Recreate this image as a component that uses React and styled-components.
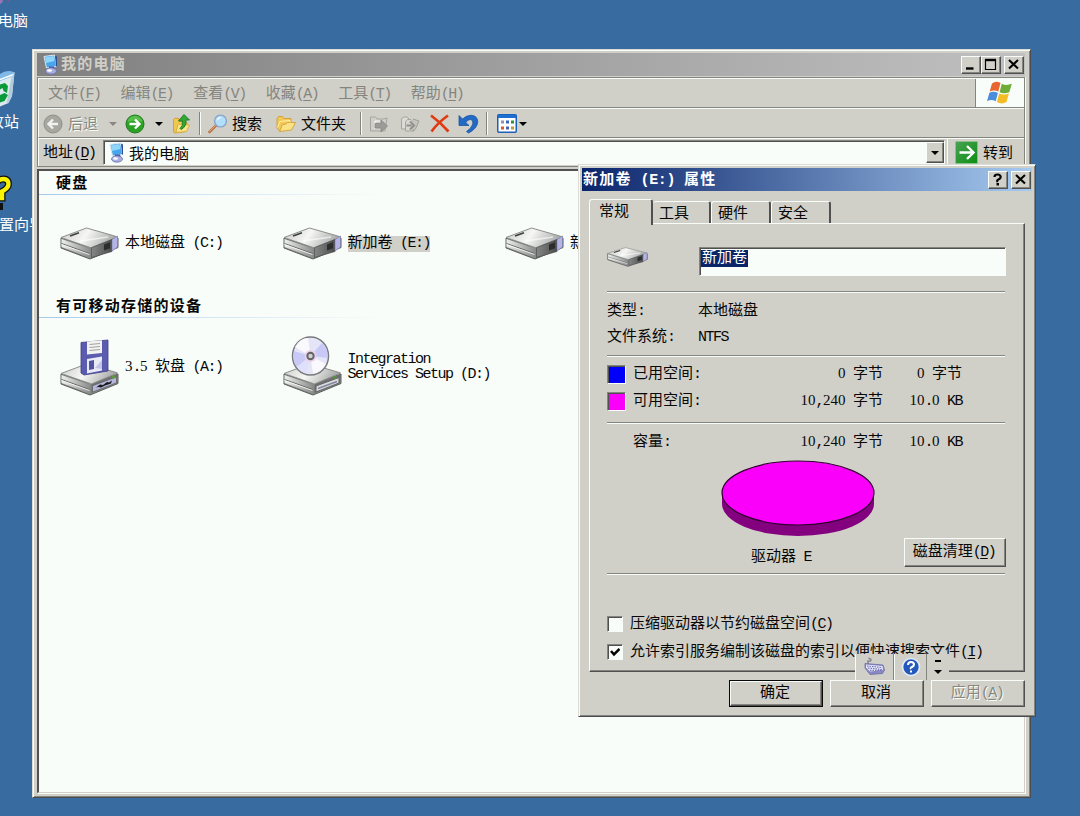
import React from 'react';
import styled, { createGlobalStyle, css } from 'styled-components';

const FACE = '#d1d0c8';
const PAPER = '#f8fdf9';
const DARK = '#505050';
const MID = '#85857f';

const Global = createGlobalStyle`
  * { box-sizing: border-box; }
  body {
    margin: 0;
    overflow: hidden;
    font-family: "Liberation Mono", "Noto Sans CJK SC", monospace;
    font-size: 15px;
    line-height: 18px;
    color: #080808;
  }
  svg { display: block; flex: none; }
`;

const Desktop = styled.main`
  position: relative;
  width: 1080px;
  height: 816px;
  overflow: hidden;
  background: #386b9f;
`;

/* ---------- text ---------- */

const Text = styled.span`
  display: inline-block;
  white-space: pre;
  height: 18px;
  color: ${p => p.$color || 'inherit'};
  ${p => p.$bold && css`font-weight: 700; letter-spacing: 1.25px;`}
  ${p => p.$disabled && css`color: #888882; text-shadow: 1px 1px 0 ${PAPER};`}
`;

const Latin = styled.span`
  letter-spacing: ${p => (p.$bold ? '-0.3px' : '-1.5px')};
`;

const Digits = styled.span`
  font-family: "Liberation Serif", serif;
  letter-spacing: 0;
  line-height: 0;
`;

const Key = styled.u`
  text-underline-offset: 2px;
`;

const withDigits = text =>
  text.split(/(\d+)/).map((run, i) => (i % 2 ? <Digits key={i}>{run}</Digits> : run));

function Label({ children, bold, disabled, color }) {
  const parts = children.split(/([\x20-\x7e]+)/).filter(Boolean);
  return (
    <Text $bold={bold} $disabled={disabled} $color={color}>
      {parts.map((part, i) => {
        if (!/^[\x20-\x7e]/.test(part)) return part;
        const at = part.indexOf('&');
        if (at < 0) return <Latin key={i} $bold={bold}>{withDigits(part)}</Latin>;
        return (
          <Latin key={i} $bold={bold}>
            {part.slice(0, at)}<Key>{part[at + 1]}</Key>{part.slice(at + 2)}
          </Latin>
        );
      })}
    </Text>
  );
}

/* ---------- icons ---------- */

const ComputerIcon = () => (
  <svg width="17" height="21" viewBox="0 0 17 21">
    <path d="M2 2.500 12.500 1l2 11.500L4.500 14z" fill="#4aa6ec" stroke="#dbe8f3" strokeWidth="1" />
    <path d="M3 3.500 11.500 2l1 5L4 9z" fill="#8fd6f9" />
    <path d="M13 1.500l2 1v10.500l-1-1z" fill="#2f4f94" />
    <path d="M7 12.500h5l1 3.500H7z" fill="#3f4da0" />
    <ellipse cx="9" cy="17" rx="5.500" ry="3.200" fill="#a9afe0" stroke="#6870ac" strokeWidth=".8" />
    <ellipse cx="7.500" cy="16.500" rx="2.500" ry="1.200" fill="#fff" />
  </svg>
);

const BackIcon = () => (
  <svg width="20" height="20" viewBox="0 0 20 20">
    <circle cx="10" cy="10" r="9" fill="#a7a7a2" stroke="#8f8f8a" />
    <path d="M15 10H6M10 5.500 5.500 10l4.500 4.500" fill="none" stroke="#f1f1ed" strokeWidth="2.400" />
  </svg>
);

const ForwardIcon = () => (
  <svg width="20" height="20" viewBox="0 0 20 20">
    <circle cx="10" cy="10" r="9" fill="#2ba126" stroke="#1c7c1b" />
    <path d="M2.500 8a7.600 7.600 0 0 1 15 0q-7 -3 -15 0z" fill="#6ccb5c" opacity=".7" />
    <path d="M4.500 10H14M10 5.500l4.500 4.500-4.500 4.500" fill="none" stroke="#fff" strokeWidth="2.400" />
  </svg>
);

const UpIcon = () => (
  <svg width="19" height="21" viewBox="0 0 19 21">
    <path d="M1.500 6.500 3 5l4 .5V8l8 1.500-1 9L3 20l-1.500-1z" fill="#f1c84e" stroke="#c8982c" strokeWidth=".8" />
    <path d="M4 19.500 6 11l11.500 1-3 6.500z" fill="#fbe488" stroke="#d3a63a" strokeWidth=".8" />
    <path d="M8 15.500q3-2 2.500-7.500H6.500l5.500-6.500L17.500 7H14q.5 7-5 9.500z" fill="#32a834" stroke="#187a22" strokeWidth=".9" />
  </svg>
);

const SearchIcon = () => (
  <svg width="20" height="20" viewBox="0 0 20 20">
    <path d="M1.500 18 8.500 11" stroke="#b8764a" strokeWidth="2.600" strokeLinecap="round" />
    <path d="M1.500 17.500 8 11" stroke="#e7a36f" strokeWidth="1" />
    <circle cx="12.500" cy="7" r="5.900" fill="#b2dffa" stroke="#8ba4cc" strokeWidth="1.400" />
    <path d="M8.500 7q1-4.500 5-4Q11 5 8.500 7z" fill="#fff" />
  </svg>
);

const FolderIcon = () => (
  <svg width="20" height="18" viewBox="0 0 20 18">
    <path d="M1 13V4l1.500-2.500h4L8 3.500h7V8l-11 8.500z" fill="#f3c954" stroke="#cf9d35" strokeWidth=".9" />
    <path d="M3.500 16.500 6.500 9.500 10 9l1.500-1.500H19.500L15.500 15z" fill="#fbe285" stroke="#d09f38" strokeWidth=".9" />
    <path d="M1.500 12.500 4 6.500l10-1v2" fill="none" stroke="#fff0ad" />
  </svg>
);

const MoveIcon = ({ copy }) => (
  <svg width="20" height="20" viewBox="0 0 20 20">
    {copy ? (
      <>
        <path d="M1.500 5l2-2H7l3 3v9H1.500z" fill="#dcdbd5" stroke="#a5a5a0" />
        <path d="M5.500 7.500l2-2H11l3 3V17H5.500z" fill="#d6d5cf" stroke="#a5a5a0" />
        <path d="M13 5l3 1 3 1-3.500 8-3.500 2" fill="#c4c3bd" stroke="#a0a09b" />
        <path d="M6.500 11.500h5M10 7.500l4 4-4 4" fill="none" stroke="#90908c" strokeWidth="2" />
      </>
    ) : (
      <>
        <path d="M1.500 17V3h5l1.500 2h7l3-1-2 13z" fill="#d0cfc9" stroke="#a5a5a0" />
        <path d="M6 15V7h5" fill="none" stroke="#fafaf6" />
        <path d="M6 9.500h6V6l6.500 6-6.500 6v-4H6z" fill="#9b9b97" stroke="#82827e" strokeWidth=".7" />
      </>
    )}
  </svg>
);

const DeleteIcon = () => (
  <svg width="20" height="19" viewBox="0 0 20 19">
    <path d="M1 1.500Q10 8 18.500 17.500M18 1.500Q8 8.500 1.500 17.500" fill="none" stroke="#df3b12" strokeWidth="2.700" />
  </svg>
);

const UndoIcon = () => (
  <svg width="21" height="20" viewBox="0 0 21 20">
    <path d="M1 1.500V11.500H11L7.800 8.500Q10 5.300 12.500 5.500 15.500 6 14.800 10 13.500 14 8.500 17.500L10.500 19Q19.500 14.500 19.800 7.500 19 1 12.500 1.300 8 1.600 4.500 5z" fill="#2369c6" stroke="#124c9c" strokeWidth=".7" />
  </svg>
);

const ViewsIcon = () => (
  <svg width="20" height="19" viewBox="0 0 20 19">
    <rect x=".75" y=".75" width="18.500" height="17.500" rx="1" fill="#fff" stroke="#1d5fb9" strokeWidth="1.500" />
    <path d="M1 1h18v3H1z" fill="#1f6fd3" />
    <path d="M4 6.500h3v3H4z" fill="#8a94b5" /><path d="M9 6.500h3v3H9z" fill="#3f62bb" /><path d="M14 6.500h3v3h-3z" fill="#2b9344" />
    <path d="M4 12.500h3v3H4z" fill="#e0552d" /><path d="M9 12.500h3v3H9z" fill="#4c66ae" /><path d="M14 12.500h3v3h-3z" fill="#c39a2d" />
  </svg>
);

const WindowsLogo = () => (
  <svg width="26" height="24" viewBox="0 0 26 24">
    <path d="M5 2.500Q9-.5 13.500 2L11.300 10.500Q7 8.300 2.700 10.500z" fill="#e8662f" />
    <path d="M14.800 2.700Q19 5 24.800 2.800L22.300 11.200Q17 13.300 12.600 11.200z" fill="#6dad37" />
    <path d="M2.400 11.700Q6.800 9.700 10.900 11.900L8.700 20.300Q4.500 18 0 20.200z" fill="#4c8ddb" />
    <path d="M12.200 12.500Q17 14.700 21.900 12.500L19.500 21Q15 23.800 9.900 21z" fill="#f3bd26" />
  </svg>
);

const GoIcon = () => (
  <svg width="23" height="23" viewBox="0 0 23 23">
    <defs><linearGradient id="go" x1="0" y1="0" x2="1" y2="1"><stop offset="0" stopColor="#4aa254" /><stop offset="1" stopColor="#0b8f12" /></linearGradient></defs>
    <rect x=".5" y=".5" width="22" height="22" rx="1" fill="url(#go)" stroke="#8cbf8a" />
    <path d="M4.500 11.500H18M12 5l6.500 6.500L12 18" fill="none" stroke="#fff" strokeWidth="2.400" />
  </svg>
);

const DriveBody = () => (
  <>
    <path d="M1 11v10L30 32l28-11.500V11L31 20.500z" fill="#888a89" stroke="#5d5f5e" strokeWidth="1" />
    <path d="M1 10.500 26.500 1 53 8.500 57.500 10 31.500 21z" fill="url(#top)" stroke="#8d8f8d" strokeWidth="1" />
    <path d="M1.500 12 29.500 21.500V30.500L1.500 20z" fill="url(#side)" />
    <path d="M1.500 16.500 29.500 26.500" stroke="#666866" strokeWidth="1" />
    <path d="M1.500 17.500 29.500 27.500" stroke="#fff" strokeWidth=".8" />
    <path d="M31.500 21.500 57 12v8L31.500 30z" fill="#6c6e6d" />
  </>
);

const Gradients = () => (
  <defs>
    <linearGradient id="top" x1="0" y1="0" x2="1" y2=".25"><stop offset="0" stopColor="#c9cbc9" /><stop offset=".5" stopColor="#f6f7f5" /><stop offset="1" stopColor="#a9abaa" /></linearGradient>
    <linearGradient id="side" x1="0" y1="0" x2="1" y2="0"><stop offset="0" stopColor="#eceeec" /><stop offset="1" stopColor="#8d8f8e" /></linearGradient>
    <linearGradient id="bay" x1="0" y1="0" x2="1" y2="0"><stop offset="0" stopColor="#858786" /><stop offset="1" stopColor="#4b4d4c" /></linearGradient>
  </defs>
);

const HardDriveIcon = ({ width = 59, height = 33 }) => (
  <svg width={width} height={height} viewBox="0 0 59 33" preserveAspectRatio="none">
    <Gradients />
    <DriveBody />
    <path d="M31.500 20.500 52 12.500v12L31.500 30.500z" fill="url(#bay)" stroke="#454746" strokeWidth=".6" />
    <path d="M44 17.500l6-2.300v6L44 23.500z" fill="#2b2d2c" />
    <path d="M52 12.500l5.500-3.500v11l-5.500 4z" fill="#b4b5e6" stroke="#7778a5" strokeWidth=".6" />
    <path d="M10 9 19 5.800" stroke="#3c3e3d" strokeWidth="1.700" />
    <path d="M20 14 48 10" stroke="#fff" strokeWidth="1.500" opacity=".6" />
  </svg>
);

const FloppyDriveIcon = () => (
  <svg width="59" height="57" viewBox="0 0 59 57">
    <Gradients />
    <g transform="translate(0 24)"><DriveBody /></g>
    <path d="M33 47 56 38.500v5L33 52.500z" fill="#b5b6dc" />
    <path d="M36 48.500l4-3 3 .5 4-3 2 .5 3-2-1 3-6 2-4 2-3-.5z" fill="#191919" />
    <circle cx="53.500" cy="38" r="1.700" fill="#5b9c38" />
    <path d="M21 3.500 48 1v31L24 36l-3-2z" fill="#5b5cb0" stroke="#3d3e83" strokeWidth=".8" />
    <path d="M27 2.500 42 1.200v12.800L27 15.500z" fill="#f2f3f1" />
    <path d="M29.500 5.500 40 4.500M29.500 8.500 40 7.500M29.500 11.500 40 10.500" stroke="#999" strokeWidth=".9" />
    <path d="M27 20 42 17.500v14L27 34.500z" fill="#eaeaf7" />
    <path d="M29 22l5-1v9l-5 1z" fill="#5253a0" />
    <path d="M35 29 42 21v9z" fill="#c3c4e4" />
  </svg>
);

const DiscDriveIcon = () => (
  <svg width="59" height="60" viewBox="0 0 59 60">
    <Gradients />
    <g transform="translate(0 27)"><DriveBody /></g>
    <path d="M33 50 56 41.500v5.500L33 56z" fill="#d9dade" stroke="#656766" />
    <path d="M35 52.500 54 45.500" stroke="#8486a0" strokeWidth="1.500" />
    <circle cx="52" cy="41.500" r="1.500" fill="#4f9435" />
    <ellipse cx="27.500" cy="20" rx="18" ry="19" fill="#e5e5f8" stroke="#787a7c" strokeWidth="1.500" />
    <path d="M27.500 20 12 11Q17 2 25 2zM27.500 20 43 28Q38 37 30 37.500z" fill="#fafafe" />
    <path d="M27.500 20 11 15Q9 25 14 31zM27.500 20 44.500 22Q45 11 39 7z" fill="#c8c9f7" />
    <path d="M27.500 20 14 31Q17 36 23 37z" fill="#dfe0fb" />
    <circle cx="27.500" cy="20" r="6" fill="#e9d2ea" />
    <circle cx="27.500" cy="20" r="3.200" fill="#d0d0d0" stroke="#606265" strokeWidth="1.900" />
  </svg>
);

const BinIcon = () => (
  <svg width="16" height="38" viewBox="0 0 16 38">
    <path d="M0 5 14.500 2 12 26 8.500 33 0 36.500z" fill="#dceaf0" />
    <path d="M0 4Q7-1 14.500 2.500L11 7 0 11z" fill="#7fb9e8" />
    <path d="M0 9.500 13.500 4.500" stroke="#f8ffff" strokeWidth="1.500" />
    <path d="M14.500 2.500 12 26 8.500 33 6.500 34 11.500 7z" fill="#b2ccd9" />
    <path d="M0 14.500 5 13l3 3-1 7-3.500-2-1-3L0 19.500zM0 25l4.500-2L8 25 4.500 31 0 32.500z" fill="#0b9a3a" />
  </svg>
);

const QuestionIcon = () => (
  <svg width="13" height="38" viewBox="0 0 13 38">
    <path d="M-4 9Q-2 4 3.500 4q5 0 5 5Q8.500 13 2 16.500V23h-5" fill="none" stroke="#111" strokeWidth="7" />
    <path d="M-4 9Q-2 4 3.500 4q5 0 5 5Q8.500 13 2 16.500V23h-5" fill="none" stroke="#f8f400" strokeWidth="4.400" />
    <path d="M0 28h3v7H0z" fill="#111" />
  </svg>
);

const KeyboardIcon = () => (
  <svg width="22" height="20" viewBox="0 0 22 20">
    <path d="M4 7V4q3 1 3-1.500L4.500 1" fill="none" stroke="#8b8b96" strokeWidth="1.600" />
    <path d="M1 6.500 19 8l1.500 5-2 3.500L6 17.500 1 11z" fill="#8788c4" stroke="#6c6da5" strokeWidth=".8" />
    <path d="M2 7.500 18.500 9 19 13 6 14.500 2 10.500z" fill="#e6e6fb" />
    <path d="M3 9 18 10.500M4 11 18 12.500M6 13.300 17 13.400" stroke="#6263a8" strokeWidth="1" strokeDasharray="1.500 1" />
  </svg>
);

const HelpIcon = () => (
  <svg width="20" height="20" viewBox="0 0 20 20">
    <circle cx="10" cy="10" r="8.500" fill="#2558bb" stroke="#e3ecf8" strokeWidth="1.700" />
    <path d="M7 8Q7 5 10 5t3 2.500Q13 9 11 10t-1 2" fill="none" stroke="#fff" strokeWidth="2" />
    <path d="M9 13.500h2v2H9z" fill="#fff" />
  </svg>
);

const Caret = styled.i`
  flex: none;
  border: 4px solid transparent;
  border-top-color: ${p => p.$color || '#000'};
  border-bottom: 0;
  width: 7px;
`;

/* ---------- common controls ---------- */

const raised = css`
  border: 1px solid;
  border-color: ${PAPER} ${DARK} ${DARK} ${PAPER};
  box-shadow: inset -1px -1px 0 ${MID};
`;

const WindowFrame = styled.section`
  position: absolute;
  display: flex;
  flex-direction: column;
  background: ${FACE};
  border: 1px solid;
  border-color: #dcdcd6 #484c50 #484c50 #dcdcd6;
  box-shadow: inset 1px 1px 0 ${PAPER}, inset -1px -1px 0 ${MID};
`;

const ExplorerFrame = styled(WindowFrame)`
  left: 32px;
  top: 49px;
  width: 999px;
  height: 749px;
  padding: 3px 5px 4px 4px;
`;

const DialogFrame = styled(WindowFrame)`
  left: 578px;
  top: 164px;
  width: 458px;
  height: 553px;
  padding: 3px;
`;

const TitleBar = styled.header`
  display: flex;
  align-items: center;
  flex: none;
  height: 23px;
  padding: 0 1px 0 ${p => (p.$active ? 1 : 5)}px;
  color: ${p => (p.$active ? '#fff' : '#d1d0c8')};
  background: ${p => (p.$active
    ? 'linear-gradient(90deg, #0a246a, #a6caf0)'
    : 'linear-gradient(90deg, #808080, #c0c0c0)')};
  ${Text} { padding-top: 1px; }
`;

const TitleText = styled.div`
  flex: 1;
  display: flex;
  gap: 2px;
  align-items: center;
`;

const CaptionButton = styled.button`
  ${raised}
  display: grid;
  place-items: center;
  width: 20px;
  height: 18px;
  padding: 0;
  margin-left: ${p => p.$gap || 0}px;
  background: ${FACE};
`;

const CaptionGlyph = ({ kind }) => (
  <svg width="14" height="13" viewBox="0 0 14 13" fill="none" stroke="#000">
    {kind === 'min' && <path d="M2 10.500H9.500" strokeWidth="2.400" />}
    {kind === 'max' && <><path d="M1.500 1v10.500h10V1" strokeWidth="1.200" /><path d="M1 2h11" strokeWidth="2.400" /></>}
    {kind === 'close' && <path d="M2 2l9 8.500M11 2l-9 8.500" strokeWidth="2.100" />}
    {kind === 'help' && <><path d="M3.500 4Q3.500 1.500 6.500 1.500T9.700 4Q9.700 5.500 7.500 6.500T6.700 9" strokeWidth="2.200" /><path d="M5.500 10h2.500v2.500H5.500z" fill="#000" stroke="none" /></>}
  </svg>
);

/* ---------- explorer ---------- */

const Bars = styled.div`
  margin-top: 1px;
  border: 1px solid ${MID};
  box-shadow: 1px 0 0 ${PAPER};
`;

const Bar = styled.div`
  display: flex;
  align-items: center;
  height: ${p => p.$h}px;
  border-top: 1px solid ${PAPER};
  border-left: 1px solid ${PAPER};
  border-bottom: ${p => (p.$last ? 0 : 1)}px solid ${MID};
  ${Text} { padding-top: 2px; }
`;

const MenuItems = styled.nav`
  display: flex;
  flex: 1;
  gap: 20px;
  padding-left: 9px;
`;

const LogoBox = styled.div`
  align-self: stretch;
  display: flex;
  align-items: center;
  justify-content: center;
  width: 49px;
  border-left: 1px solid ${MID};
  background: ${PAPER};
`;

const Tool = styled.div`
  display: flex;
  align-items: center;
  gap: ${p => p.$gap || 4}px;
  margin-left: ${p => p.$ml}px;
  padding-top: 1px;
`;

const ToolRule = styled.i`
  width: 2px;
  height: 23px;
  margin-left: ${p => p.$ml}px;
  border-left: 1px solid ${MID};
  border-right: 1px solid ${PAPER};
`;

const AddressLabel = styled.div`
  width: 64px;
  padding-left: 4px;
`;

const Combo = styled.div`
  display: flex;
  align-items: center;
  flex: 1;
  gap: 4px;
  height: 25px;
  padding-left: 4px;
  border: 1px solid;
  border-color: ${MID} ${PAPER} ${PAPER} ${MID};
  box-shadow: inset 1px 1px 0 ${DARK};
  background: ${PAPER};
  ${Text} { padding-top: 3px; }
`;

const ComboButton = styled.button`
  ${raised}
  display: grid;
  place-items: center;
  width: 18px;
  height: 21px;
  padding: 0;
  margin: 0 0 0 auto;
  background: ${FACE};
`;

const Go = styled.div`
  display: flex;
  align-items: center;
  gap: 5px;
  width: 77px;
  height: 100%;
  margin-left: 2px;
  padding-left: 7px;
  border-left: 1px solid ${PAPER};
`;

const FileArea = styled.div`
  flex: 1;
  margin-top: 2px;
  border: 2px solid;
  border-color: ${DARK} ${FACE} ${FACE} ${DARK};
  border-right-width: 1px;
  border-bottom-width: 1px;
  box-shadow: 1px 1px 0 ${PAPER};
  background: ${PAPER};
`;

const GroupTitle = styled.h2`
  margin: 0;
  height: 24px;
  padding: 2px 0 0 17px;
  font-size: 15px;
  border-bottom: 1px solid;
  border-image: linear-gradient(90deg, #a4c9ec 0, #cfe2f3 150px, transparent 345px) 1;
  ${Text} { padding-top: 3px; }
`;

const Group = styled.div`
  display: flex;
  align-items: flex-end;
  height: ${p => p.$h}px;
  padding-left: 21px;
`;

const Drive = styled.div`
  display: flex;
  align-items: center;
  gap: 6px;
  width: 222.5px;
  white-space: nowrap;
`;

const DriveName = styled.div`
  line-height: 15px;
  display: flex;
  flex-direction: column;
  align-items: flex-start;
  background: ${p => (p.$selected ? FACE : 'transparent')};
  ${Text} {
    height: ${p => (p.$two ? 15 : 16)}px;
    padding-top: ${p => (p.$two ? 1 : 0)}px;
  }
`;

/* ---------- properties dialog ---------- */

const Tabs = styled.div`
  display: flex;
  align-items: flex-end;
  height: 32px;
  margin-left: 7px;
`;

const Tab = styled.div`
  width: ${p => p.$w}px;
  height: ${p => (p.$on ? 26 : 22)}px;
  margin-bottom: ${p => (p.$on ? -2 : 0)}px;
  padding: ${p => (p.$on ? '4px 0 0 9px' : '4px 0 0 6px')};
  background: ${FACE};
  border: 1px solid ${PAPER};
  border-right: 2px solid ${DARK};
  border-left-width: ${p => (p.$after ? 0 : 1)}px;
  border-bottom: 0;
  border-radius: 3px 3px 0 0;
  ${p => p.$on && css`position: relative; z-index: 1;`}
`;

const Page = styled.div`
  width: 436px;
  height: 449px;
  margin-left: 7px;
  padding: 0 17px;
  border: 1px solid;
  border-color: ${PAPER} ${DARK} ${DARK} ${PAPER};
  box-shadow: inset -1px -1px 0 ${MID};
`;

const Rule = styled.hr`
  width: 398px;
  height: 2px;
  margin: 0;
  border: 0;
  border-top: 1px solid ${MID};
  border-bottom: 1px solid ${PAPER};
`;

const NameRow = styled.div`
  display: flex;
  align-items: flex-start;
  justify-content: space-between;
  width: 399px;
  height: 67px;
  padding-top: 23px;
`;

const NameInput = styled.div`
  width: 307px;
  height: 29px;
  padding: 1px;
  border: 1px solid;
  border-color: ${MID} ${PAPER} ${PAPER} ${MID};
  box-shadow: inset 1px 1px 0 ${DARK};
  background: ${PAPER};
`;

const Selection = styled.span`
  display: inline-block;
  height: 17px;
  line-height: 18px;
  padding: 0 1px;
  margin: 1px 0 0;
  color: #fff;
  background: #0a246a;
`;

const Block = styled.div`
  height: ${p => p.$h}px;
  padding-top: ${p => p.$pt}px;
  ${Text} { padding-top: 1px; }
`;

const InfoRow = styled.div`
  display: grid;
  grid-template-columns: 91px 1fr;
  height: 26px;
`;

const UsageRow = styled.div`
  display: grid;
  grid-template-columns: 26px 110px 140px 79px;
  height: 26.500px;
  & > :nth-child(n+3) { justify-self: end; }
`;

const Swatch = styled.i`
  width: 19px;
  height: 19px;
  border: 1px solid;
  border-color: ${MID} ${PAPER} ${PAPER} ${MID};
  box-shadow: inset 1px 1px 0 ${DARK};
  background: ${p => p.$color || 'transparent'};
  visibility: ${p => (p.$color ? 'visible' : 'hidden')};
`;

const ChartRow = styled.div`
  display: flex;
  justify-content: space-between;
  align-items: flex-end;
  width: 399px;
  height: 113px;
  padding-left: 114px;
`;

const Chart = styled.div`
  display: flex;
  flex-direction: column;
  gap: 12px;
  height: 113px;
`;

const ChartLabel = styled.div`
  padding-left: 30px;
`;

const CleanupSlot = styled.div`
  padding-bottom: 6px;
  ${Text} { padding-top: 1px; }
`;

const Button = styled.button`
  ${raised}
  display: flex;
  align-items: center;
  justify-content: center;
  width: ${p => p.$w || 94}px;
  height: ${p => p.$h || 27}px;
  padding: 0 2px 1px 0;
  font: inherit;
  color: inherit;
  background: ${FACE};
  ${p => p.$default && css`outline: 1px solid #080808; outline-offset: -1px; border-width: 2px;`}
`;

const Check = styled.div`
  display: flex;
  align-items: center;
  gap: 7px;
  height: 28px;
`;

const Box = styled.i`
  display: grid;
  place-items: center;
  width: 16px;
  height: 16px;
  border: 1px solid;
  border-color: ${MID} ${PAPER} ${PAPER} ${MID};
  box-shadow: inset 1px 1px 0 ${DARK};
  background: ${PAPER};
`;

const Actions = styled.div`
  display: flex;
  gap: 7px;
  margin: 8px 0 0 147px;
  ${Text} { padding-top: 1px; }
`;

/* ---------- floating items ---------- */

const DesktopItem = styled.div`
  position: absolute;
  left: 0;
  top: ${p => p.$y}px;
  width: 32px;
  height: ${p => p.$h}px;
  overflow: hidden;
  display: flex;
  flex-direction: column;
  color: #fff;
`;

const Caption = styled.div`
  margin-top: auto;
  margin-left: ${p => p.$shift}px;
`;

const LanguageBar = styled.aside`
  position: absolute;
  left: 855px;
  top: 654px;
  width: 94px;
  height: 26px;
  display: flex;
  align-items: center;
  background: ${FACE};
`;

const LangCell = styled.div`
  display: flex;
  align-items: center;
  justify-content: center;
  width: ${p => p.$w}px;
  height: 26px;
  border-left: 1px solid ${PAPER};
  border-right: 1px solid ${MID};
`;

const LangMenu = styled.div`
  display: flex;
  flex-direction: column;
  align-items: center;
  gap: 8px;
  width: 22px;
`;

const Dash = styled.i`
  width: 6px;
  height: 2px;
  background: #000;
`;

const MENUS = ['文件(&F)', '编辑(&E)', '查看(&V)', '收藏(&A)', '工具(&T)', '帮助(&H)'];

function Explorer() {
  return (
    <ExplorerFrame>
      <TitleBar>
        <TitleText><ComputerIcon /><Label bold>我的电脑</Label></TitleText>
        <CaptionButton><CaptionGlyph kind="min" /></CaptionButton>
        <CaptionButton><CaptionGlyph kind="max" /></CaptionButton>
        <CaptionButton $gap={3}><CaptionGlyph kind="close" /></CaptionButton>
      </TitleBar>
      <Bars>
        <Bar $h={30}>
          <MenuItems>{MENUS.map(m => <Label key={m} color="#858580">{m}</Label>)}</MenuItems>
          <LogoBox><WindowsLogo /></LogoBox>
        </Bar>
        <Bar $h={30}>
          <Tool $ml={4} $gap={5}><BackIcon /><Label disabled>后退</Label></Tool>
          <Tool $ml={11}><Caret $color="#888882" /></Tool>
          <Tool $ml={8}><ForwardIcon /></Tool>
          <Tool $ml={10}><Caret /></Tool>
          <Tool $ml={9}><UpIcon /></Tool>
          <ToolRule $ml={8} />
          <Tool $ml={7}><SearchIcon /><Label>搜索</Label></Tool>
          <Tool $ml={14} $gap={5}><FolderIcon /><Label>文件夹</Label></Tool>
          <ToolRule $ml={14} />
          <Tool $ml={7}><MoveIcon /></Tool>
          <Tool $ml={11}><MoveIcon copy /></Tool>
          <Tool $ml={10}><DeleteIcon /></Tool>
          <Tool $ml={8}><UndoIcon /></Tool>
          <ToolRule $ml={7} />
          <Tool $ml={9}><ViewsIcon /></Tool>
          <Tool $ml={2}><Caret /></Tool>
        </Bar>
        <Bar $h={28} $last>
          <AddressLabel><Label>地址(&D)</Label></AddressLabel>
          <Combo>
            <ComputerIcon /><Label>我的电脑</Label>
            <ComboButton><Caret /></ComboButton>
          </Combo>
          <Go><GoIcon /><Label>转到</Label></Go>
        </Bar>
      </Bars>
      <FileArea>
        <GroupTitle><Label bold>硬盘</Label></GroupTitle>
        <Group $h={65}>
          <Drive><HardDriveIcon /><DriveName><Label>本地磁盘 (C:)</Label></DriveName></Drive>
          <Drive><HardDriveIcon /><DriveName $selected><Label>新加卷 (E:)</Label></DriveName></Drive>
          <Drive><HardDriveIcon /><DriveName><Label>新加卷 (F:)</Label></DriveName></Drive>
        </Group>
        <Group $h={34} />
        <GroupTitle><Label bold>有可移动存储的设备</Label></GroupTitle>
        <Group $h={78}>
          <Drive><FloppyDriveIcon /><DriveName><Label>3.5 软盘 (A:)</Label></DriveName></Drive>
          <Drive>
            <DiscDriveIcon />
            <DriveName $two><Label>Integration</Label><Label>Services Setup (D:)</Label></DriveName>
          </Drive>
        </Group>
      </FileArea>
    </ExplorerFrame>
  );
}

function Properties() {
  return (
    <DialogFrame>
      <TitleBar $active>
        <TitleText><Label bold>新加卷 (E:) 属性</Label></TitleText>
        <CaptionButton><CaptionGlyph kind="help" /></CaptionButton>
        <CaptionButton $gap={3}><CaptionGlyph kind="close" /></CaptionButton>
      </TitleBar>
      <Tabs>
        <Tab $w={64} $on><Label>常规</Label></Tab>
        <Tab $w={58} $after><Label>工具</Label></Tab>
        <Tab $w={60}><Label>硬件</Label></Tab>
        <Tab $w={60}><Label>安全</Label></Tab>
      </Tabs>
      <Page>
        <NameRow>
          <HardDriveIcon width={41} height={20} />
          <NameInput><Selection><Label>新加卷</Label></Selection></NameInput>
        </NameRow>
        <Rule />
        <Block $h={62} $pt={9}>
          <InfoRow><Label>类型:</Label><Label>本地磁盘</Label></InfoRow>
          <InfoRow><Label>文件系统:</Label><Label>NTFS</Label></InfoRow>
        </Block>
        <Rule />
        <Block $h={65} $pt={8}>
          <UsageRow><Swatch $color="#0000fa" /><Label>已用空间:</Label><Label>0 字节</Label><Label>0 字节</Label></UsageRow>
          <UsageRow><Swatch $color="#fa00fa" /><Label>可用空间:</Label><Label>10,240 字节</Label><Label>10.0 KB</Label></UsageRow>
        </Block>
        <Rule />
        <Block $h={36} $pt={9}>
          <UsageRow><Swatch /><Label>容量:</Label><Label>10,240 字节</Label><Label>10.0 KB</Label></UsageRow>
        </Block>
        <ChartRow>
          <Chart>
            <svg width="154" height="77" viewBox="0 0 154 77">
              <path d="M1 33v11a76 32 0 0 0 152 0V33z" fill="#83007f" />
              <ellipse cx="77" cy="33" rx="76" ry="32" fill="#fa00fa" stroke="#300030" strokeWidth="1.200" />
            </svg>
            <ChartLabel><Label>驱动器 E</Label></ChartLabel>
          </Chart>
          <CleanupSlot><Button $w={102} $h={29}><Label>磁盘清理(&D)</Label></Button></CleanupSlot>
        </ChartRow>
        <Rule />
        <Block $h={90} $pt={35}>
          <Check><Box /><Label>压缩驱动器以节约磁盘空间(&C)</Label></Check>
          <Check>
            <Box><svg width="10" height="10" viewBox="0 0 10 10"><path d="M1 4l3 3.500L9.500 2" fill="none" stroke="#000" strokeWidth="2.500" /></svg></Box>
            <Label>允许索引服务编制该磁盘的索引以便快速搜索文件(&I)</Label>
          </Check>
        </Block>
      </Page>
      <Actions>
        <Button $default><Label>确定</Label></Button>
        <Button><Label>取消</Label></Button>
        <Button><Label disabled>应用(&A)</Label></Button>
      </Actions>
    </DialogFrame>
  );
}

export default function App() {
  return (
    <Desktop>
      <Global />
      <DesktopItem $y={0} $h={32}>
        <svg width="12" height="5" viewBox="0 0 12 5"><path d="M0 0h3l-1 3-2 1z" fill="#9b72b5" /><path d="M7 0h3l-1 2z" fill="#8c4f8e" /></svg>
        <Caption $shift={-32}><Label>我的电脑</Label></Caption>
      </DesktopItem>
      <DesktopItem $y={70} $h={63}><BinIcon /><Caption $shift={-26}><Label>回收站</Label></Caption></DesktopItem>
      <DesktopItem $y={175} $h={61}><QuestionIcon /><Caption $shift={-46}><Label>安全配置向导</Label></Caption></DesktopItem>
      <Explorer />
      <Properties />
      <LanguageBar>
        <LangCell $w={39}><KeyboardIcon /></LangCell>
        <LangCell $w={33}><HelpIcon /></LangCell>
        <LangMenu><Dash /><Caret /></LangMenu>
      </LanguageBar>
    </Desktop>
  );
}
